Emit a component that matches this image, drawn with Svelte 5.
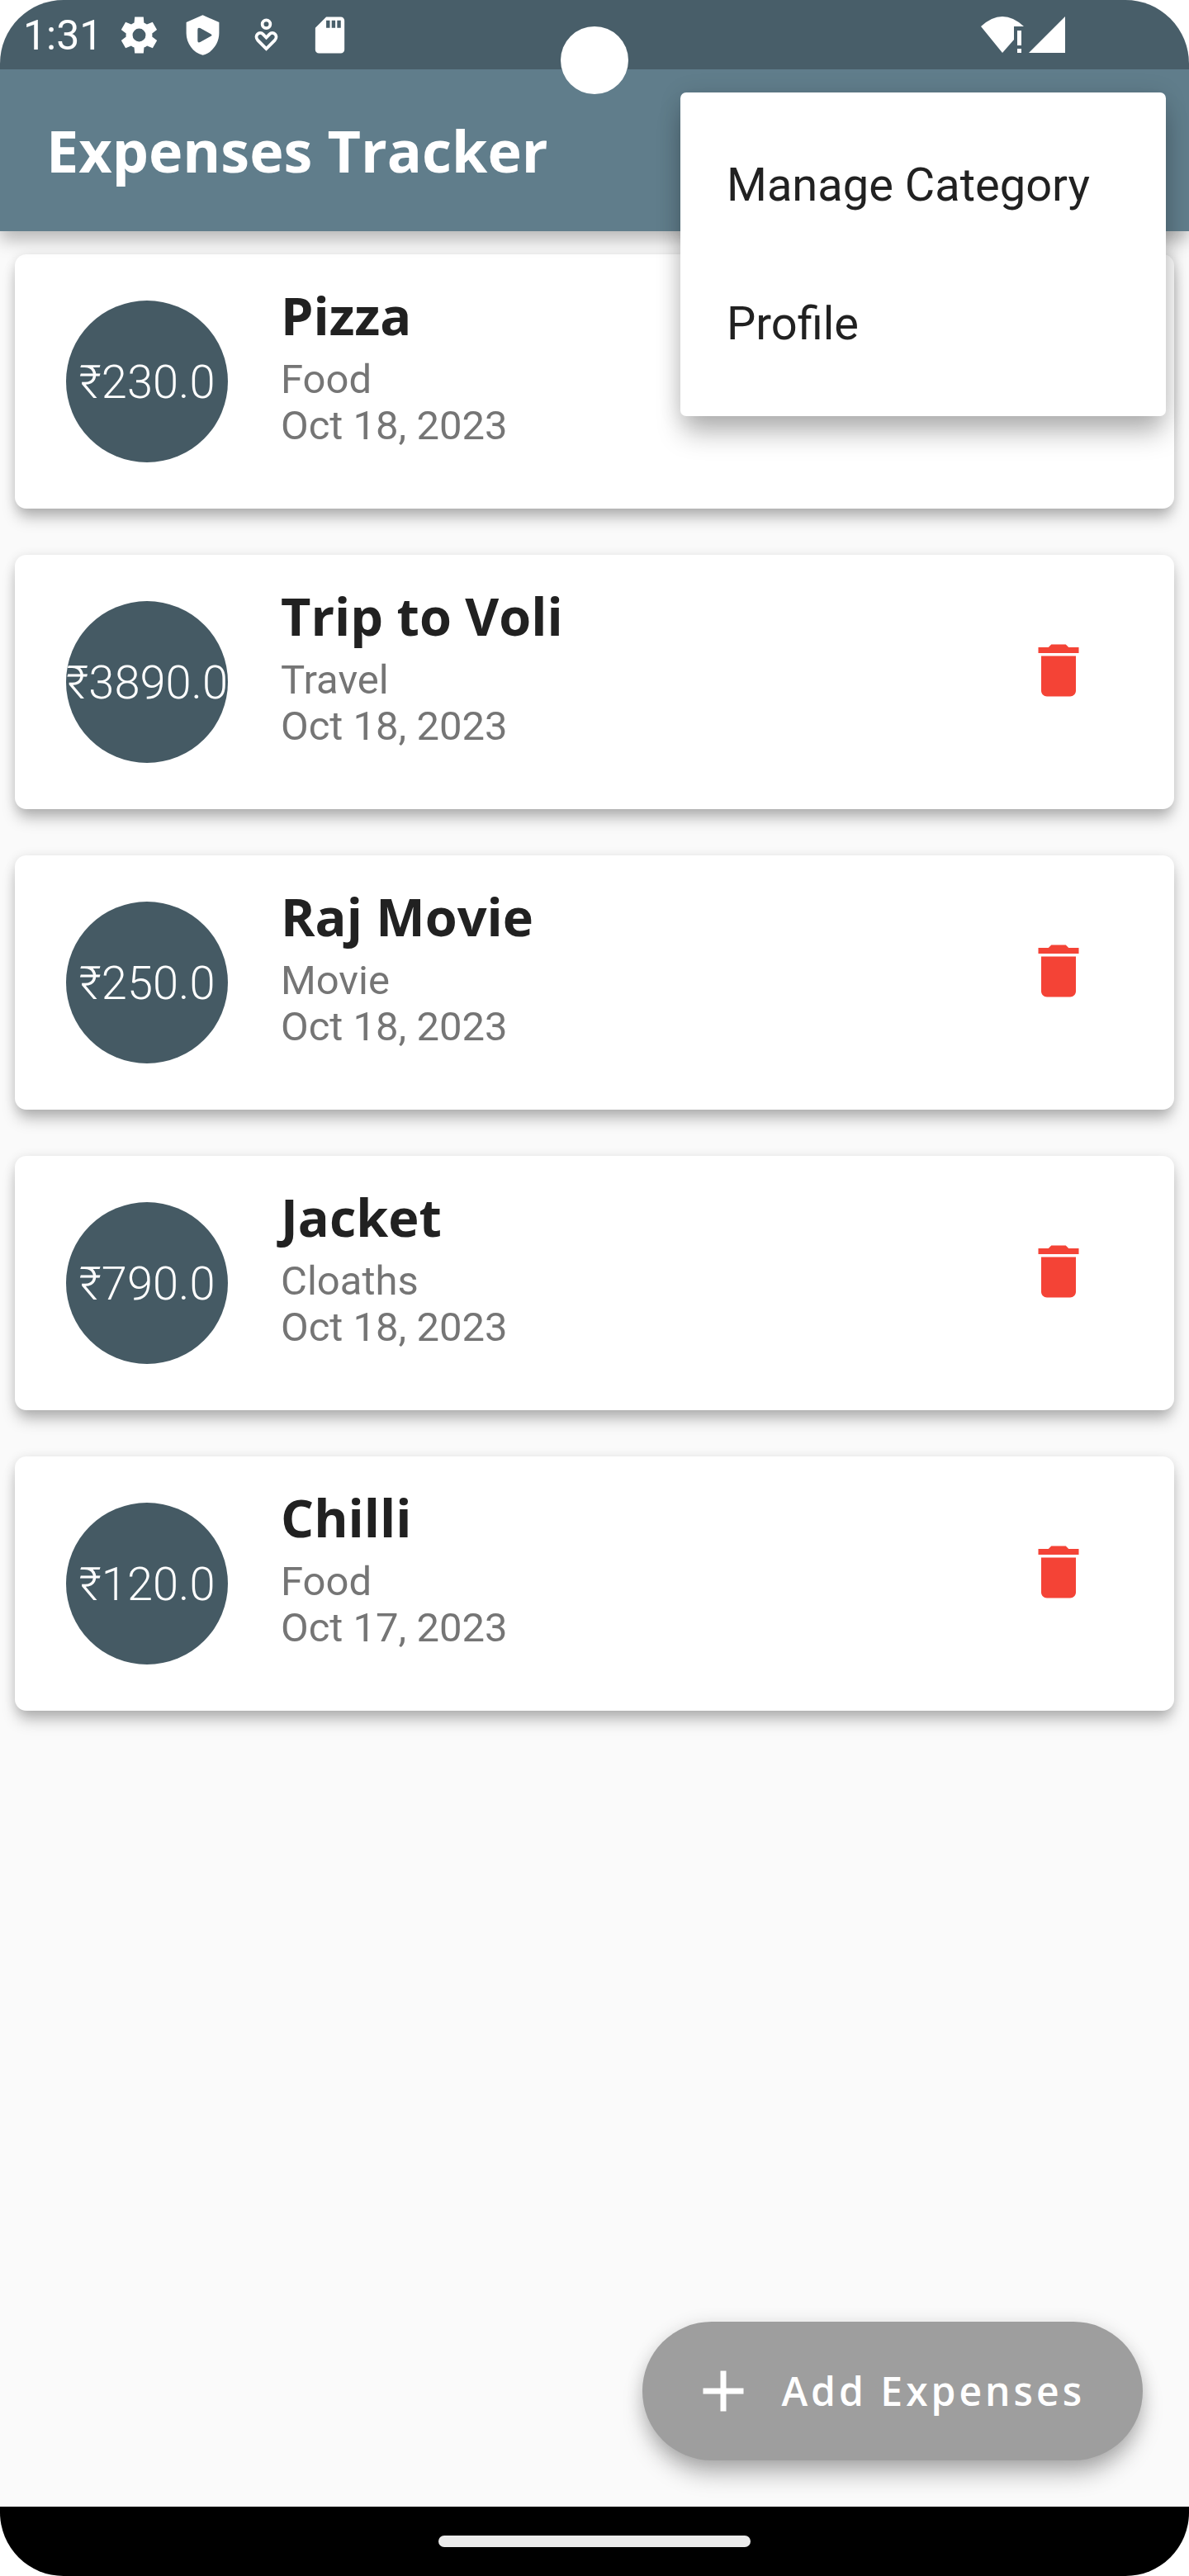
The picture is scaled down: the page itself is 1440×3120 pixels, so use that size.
<script>
  let expenses = $state([
    { title: 'Pizza', category: 'Food', date: 'Oct 18, 2023', amount: '₹230.0' },
    { title: 'Trip to Voli', category: 'Travel', date: 'Oct 18, 2023', amount: '₹3890.0' },
    { title: 'Raj Movie', category: 'Movie', date: 'Oct 18, 2023', amount: '₹250.0' },
    { title: 'Jacket', category: 'Cloaths', date: 'Oct 18, 2023', amount: '₹790.0' },
    { title: 'Chilli', category: 'Food', date: 'Oct 17, 2023', amount: '₹120.0' }
  ]);
  const menu = ['Manage Category', 'Profile'];

  function remove(expense) {
    expenses = expenses.filter((e) => e !== expense);
  }
</script>

<div class="screen">
  <div class="camera"></div>

  <div class="status">
    <span class="clock">1:31</span>
    <div class="notices">
      <svg viewBox="0 0 24 24"><path fill-rule="evenodd" d="M19.14 12.94c.04-.3.06-.61.06-.94 0-.32-.02-.64-.07-.94l2.63-2.05-2.4-4.15-3.1 1.24a7 7 0 0 0-1.62-.94L14.4 2H9.6l-.3 3.16c-.59.24-1.13.57-1.62.94l-3.1-1.24-2.4 4.15 2.68 2.05a7 7 0 0 0-.02 1.88l-2.66 2.05 2.4 4.15 3.1-1.24c.5.38 1.03.7 1.62.94L9.6 22h4.8l.3-3.16c.59-.24 1.13-.56 1.62-.94l3.1 1.24 2.4-4.15zM12 15.6A3.6 3.6 0 1 1 12 8.4a3.6 3.6 0 0 1 0 7.2z" /></svg>
      <svg viewBox="0 0 24 24"><path fill-rule="evenodd" d="M12 1 3 5v6c0 5.550 3.840 10.740 9 12 5.160-1.260 9-6.450 9-12V5zM10.600 8.200 16.500 11.400Q17.500 12 16.500 12.600L10.600 15.900Q9.200 16.500 9.200 15V9Q9.200 7.600 10.600 8.200z" /></svg>
      <svg viewBox="0 0 24 24"><g fill="none" stroke="#fff" stroke-width="1.700"><circle cx="12" cy="6" r="2.200" /><path d="M12 19.500 7.400 14.900C5 12.200 8.300 9.500 10.300 11.600L12 13.400l1.700-1.800c2-2.100 5.300.6 2.900 3.300z" /></g></svg>
      <svg viewBox="0 0 24 24"><path d="M18 2h-8L4.020 8 4 20c0 1.100.9 2 2 2h12c1.100 0 2-.9 2-2V4c0-1.100-.9-2-2-2zm-6 6h-2V4h2v4zm3 0h-2V4h2v4zm3 0h-2V4h2v4z" /></svg>
    </div>
    <svg class="signals" viewBox="0 0 102 44"><path d="M0 12Q26-12 52 12H40V28L26 44zM44 17h5v18h-5zM44 39h5v5h-5zM102 0v44H58z" /></svg>
  </div>

  <header>
    <h1>Expenses Tracker</h1>
    <div class="menu" role="menu">
      {#each menu as item}
        <button role="menuitem">{item}</button>
      {/each}
    </div>
  </header>

  <main>
    <ul>
      {#each expenses as expense}
        <li>
          <div class="amount">{expense.amount}</div>
          <div class="details">
            <h2>{expense.title}</h2>
            <p>{expense.category}</p>
            <p>{expense.date}</p>
          </div>
          <button class="delete" aria-label="Delete {expense.title}" onclick={() => remove(expense)}>
            <svg viewBox="0 0 24 24"><path d="M6 19c0 1.100.9 2 2 2h8c1.100 0 2-.9 2-2V7H6v12zM19 4h-3.500l-1-1h-5l-1 1H5v2h14V4z" /></svg>
          </button>
        </li>
      {/each}
    </ul>
    <button class="add">
      <svg viewBox="0 0 24 24"><path d="M19 13h-6v6h-2v-6H5v-2h6V5h2v6h6z" /></svg>
      <span>Add Expenses</span>
    </button>
  </main>

  <footer><div class="handle"></div></footer>
</div>

<style>
  :global(body) {
    margin: 0;
    background: #fff;
  }
  .screen {
    position: relative;
    display: flex;
    flex-direction: column;
    min-height: 100vh;
    border-radius: 77px;
    overflow: hidden;
    background: #fafafa;
    font-family: Roboto, sans-serif;
    color: #212121;
  }
  h1, h2, p, ul {
    margin: 0;
    padding: 0;
  }
  svg {
    display: block;
    fill: currentColor;
  }
  button {
    border: 0;
    background: none;
    color: inherit;
    font: inherit;
    cursor: pointer;
  }
  .camera {
    position: absolute;
    z-index: 3;
    top: 32px;
    left: 50%;
    width: 82px;
    height: 82px;
    margin-left: -41px;
    border-radius: 50%;
    background: #fff;
  }
  .status {
    position: relative;
    z-index: 2;
    display: flex;
    align-items: center;
    height: 84px;
    padding: 0 150px 0 28px;
    box-sizing: border-box;
    background: #485e69;
    color: #fff;
  }
  .clock {
    font-size: 50px;
    line-height: 56px;
    padding-top: 2px;
  }
  .notices {
    display: flex;
    gap: 24px;
    margin-left: 18px;
  }
  .notices svg {
    width: 53px;
    height: 53px;
  }
  .signals {
    width: 102px;
    height: 44px;
    margin-left: auto;
  }
  header {
    position: relative;
    z-index: 1;
    display: flex;
    align-items: center;
    height: 196px;
    padding: 0 56px;
    background: #607d8b;
    color: #fff;
    box-shadow: 0 10px 20px rgba(0, 0, 0, 0.28);
  }
  h1 {
    font: 700 70px/96px "Open Sans", sans-serif;
  }
  .menu {
    position: absolute;
    top: 28px;
    right: 28px;
    display: flex;
    flex-direction: column;
    width: 588px;
    padding: 28px 0;
    box-sizing: border-box;
    border-radius: 7px;
    background: #fff;
    color: #212121;
    box-shadow: 0 24px 32px -4px rgba(0, 0, 0, 0.27), 0 2px 28px rgba(0, 0, 0, 0.12);
  }
  .menu button {
    height: 168px;
    padding: 0 56px;
    font-size: 56px;
    text-align: left;
  }
  main {
    flex: 1;
    display: flex;
    flex-direction: column;
    justify-content: space-between;
    padding: 28px 18px 56px;
  }
  ul {
    display: flex;
    flex-direction: column;
    gap: 56px;
    list-style: none;
  }
  li {
    display: flex;
    align-items: flex-start;
    min-height: 308px;
    padding: 0 56px 0 62px;
    box-sizing: border-box;
    border-radius: 14px;
    background: #fff;
    box-shadow: 0 14px 18px -3px rgba(0, 0, 0, 0.25), 0 2px 14px rgba(0, 0, 0, 0.12);
  }
  .amount {
    display: flex;
    flex: none;
    align-items: center;
    justify-content: center;
    width: 196px;
    height: 196px;
    margin-top: 56px;
    padding-top: 2px;
    box-sizing: border-box;
    border-radius: 50%;
    background: #455a64;
    color: #fff;
    font: 300 56px/70px Roboto, sans-serif;
    white-space: nowrap;
  }
  .details {
    flex: 1;
    padding: 30px 0 0 64px;
  }
  h2 {
    font: 700 63px/88px "Open Sans", sans-serif;
    margin-bottom: 6px;
  }
  p {
    font-size: 49px;
    line-height: 56px;
    color: #757575;
  }
  .delete {
    display: grid;
    place-items: center;
    width: 168px;
    height: 168px;
    margin-top: 56px;
    padding: 0;
    color: #f44336;
  }
  .delete svg,
  .add svg {
    width: 84px;
    height: 84px;
  }
  .add {
    display: flex;
    align-items: center;
    align-self: flex-end;
    gap: 28px;
    height: 168px;
    margin-right: 38px;
    padding: 0 70px 0 56px;
    border-radius: 84px;
    background: #9e9e9e;
    color: #fff;
    font: 600 48px/64px "Open Sans", sans-serif;
    letter-spacing: 4px;
    box-shadow: 0 20px 28px -4px rgba(0, 0, 0, 0.28), 0 2px 21px rgba(0, 0, 0, 0.12);
  }
  footer {
    display: grid;
    place-items: center;
    height: 84px;
    background: #000;
  }
  .handle {
    width: 378px;
    height: 14px;
    border-radius: 7px;
    background: #ebebeb;
  }
</style>
